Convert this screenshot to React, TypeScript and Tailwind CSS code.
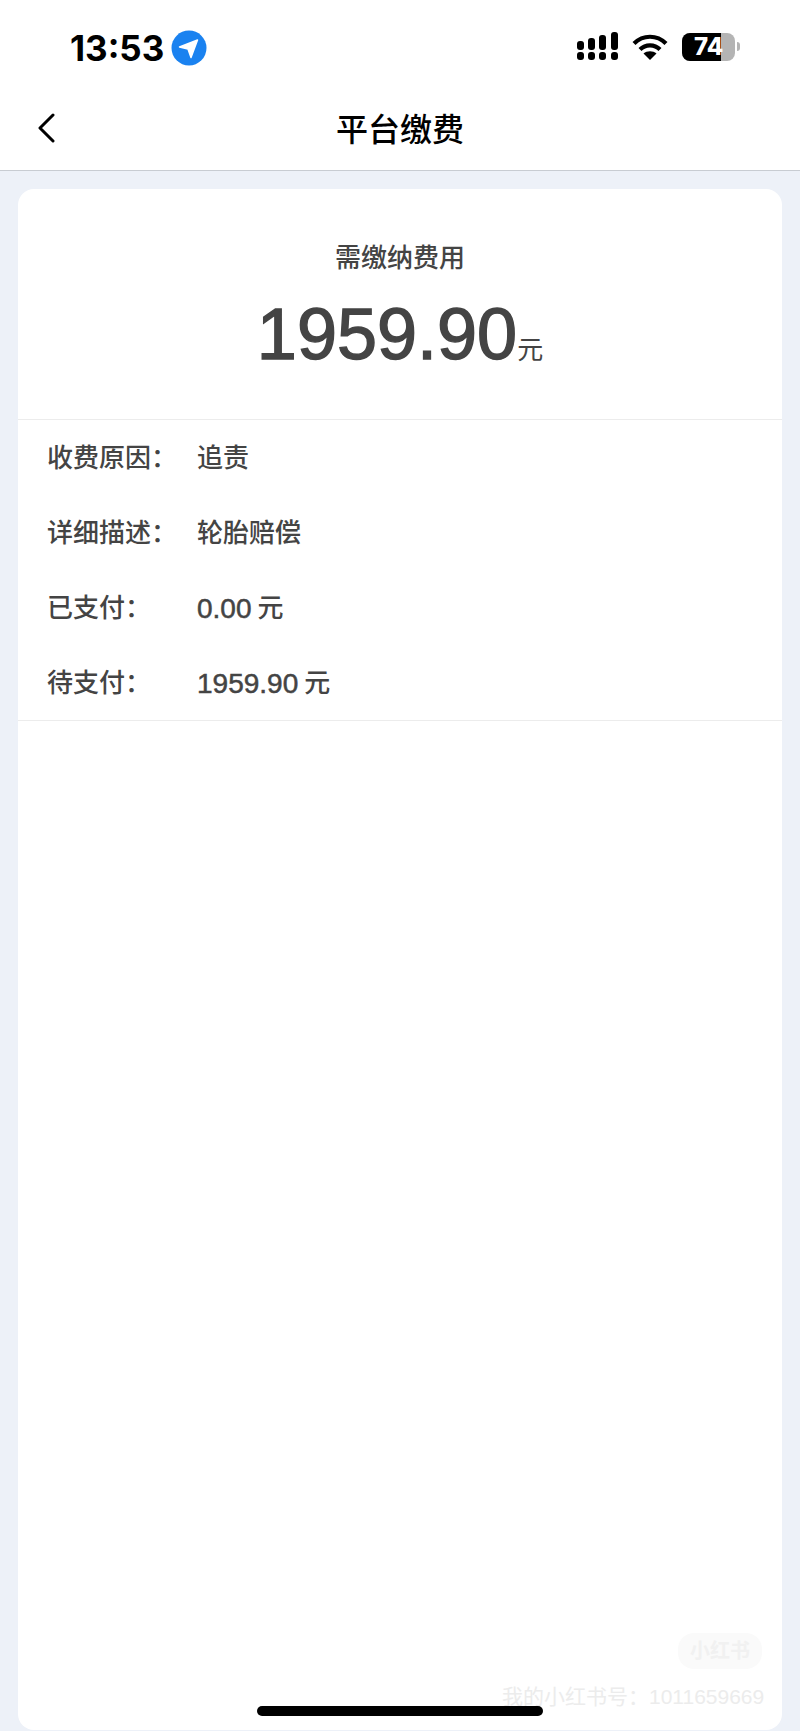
const cjk = 'font-["Liberation_Sans","Noto_Sans_CJK_SC",sans-serif]'

const ROWS = [
  { label: '收费原因：', value: '追责' },
  { label: '详细描述：', value: '轮胎赔偿' },
  { label: '已支付：', num: '0.00', value: '元' },
  { label: '待支付：', num: '1959.90', value: '元' },
]

function StatusBar() {
  return (
    <div className="h-[94px] flex items-start justify-between pl-[70px] pr-[60px] pt-[30px]">
      <div className="flex items-center gap-[6px]">
        <span className='text-[35px] leading-[36px] font-bold text-black font-["Inter",sans-serif]'>13:53</span>
        <svg width="36" height="36" viewBox="0 0 36 36" className="ml-[1px]">
          <circle cx="18" cy="18" r="17.5" fill="#1a82f0" />
          <path d="M8.5 17 L26.5 10 L20 27.5 L17 19 Z" fill="#fff" stroke="#fff" strokeWidth="1.5" strokeLinejoin="round" />
        </svg>
      </div>
      <div className="flex items-center gap-[14px] pt-[2px]">
        <svg width="41" height="29" viewBox="0 0 41 29" fill="#000">
          <rect x="0" y="9" width="7" height="9" rx="3" />
          <rect x="11" y="6" width="7" height="12" rx="3" />
          <rect x="22" y="3" width="7" height="15" rx="3" />
          <rect x="34" y="0" width="7" height="18" rx="3" />
          <rect x="0" y="20" width="7" height="8" rx="3" />
          <rect x="11" y="20" width="7" height="8" rx="3" />
          <rect x="22" y="20" width="7" height="8" rx="3" />
          <rect x="34" y="20" width="7" height="8" rx="3" />
        </svg>
        <svg width="36" height="28" viewBox="0 0 36 28" fill="none" stroke="#000" strokeWidth="4.2">
          <path d="M2 10.5 C11 1.5 25 1.5 34 10.5" />
          <path d="M8 16.5 C13.5 11 22.5 11 28 16.5" />
          <path d="M18 27 L11.5 20.5 C15 17.5 21 17.5 24.5 20.5 Z" fill="#000" stroke="none" />
        </svg>
        <div className="flex items-center gap-[2px]">
          <div className="relative w-[53px] h-[28px] rounded-[8px] bg-[#b4b4b4] overflow-hidden">
            <div className="w-[39px] h-full bg-black" />
            <span className='absolute left-[12px] top-0 text-[24px] leading-[28px] font-extrabold text-white font-["Inter",sans-serif]'>74</span>
          </div>
          <div className="w-[3px] h-[9px] rounded-r-full bg-[#b4b4b4]" />
        </div>
      </div>
    </div>
  )
}

export default function App() {
  return (
    <div className={`relative w-[800px] h-[1731px] overflow-hidden bg-[#edf1f8] ${cjk}`}>
      <div className="bg-white border-b border-[#c8ccd2]">
        <StatusBar />
        <div className="relative h-[76px] flex items-center justify-center">
          <svg className="absolute left-[36px] top-[19px]" width="20" height="30" viewBox="0 0 20 30" fill="none" stroke="#000" strokeWidth="3" strokeLinecap="round" strokeLinejoin="round">
            <path d="M17 2 L4 15 L17 28" />
          </svg>
          <h1 className="text-[32px] leading-[40px] font-medium text-black pb-[5px]">平台缴费</h1>
        </div>
      </div>

      <div className="mx-[18px] mt-[18px] h-[1541px] rounded-[16px] bg-white">
        <div className="h-[231px] pt-[51px] border-b border-[#ececec] flex flex-col items-center">
          <div className="text-[26px] leading-[36px] font-medium text-[#444]">需缴纳费用</div>
          <div className="mt-[15px] flex items-baseline text-[#444]">
            <span className="text-[72px] leading-[86px] [-webkit-text-stroke:1.4px_#444]">1959.90</span>
            <span className="text-[26px] leading-[30px]">元</span>
          </div>
        </div>
        <div className="border-b border-[#ececec] h-[301px] pt-[1px]">
          {ROWS.map(r => (
            <div key={r.label} className="h-[75px] flex items-center pl-[29px] text-[26px] font-medium text-[#444]">
              <span className="w-[150px]">{r.label}</span>
              {r.num && <span className="text-[28px] mr-[6px] [-webkit-text-stroke:0.5px_#444]">{r.num}</span>}
              <span>{r.value}</span>
            </div>
          ))}
        </div>
      </div>

      {/* xhs watermark, sits over the card */}
      <div className="absolute left-[678px] top-[1633px] w-[84px] h-[36px] rounded-[16px] bg-[#fafafa] flex items-center justify-center text-[20px] font-bold text-[#f1f1f1]">小红书</div>
      <div className="absolute left-[502px] top-[1683px] text-[21px] leading-[28px] text-[#ececec]">我的小红书号：1011659669</div>
      <div className="absolute left-[257px] top-[1706px] w-[286px] h-[10px] rounded-full bg-black" />
    </div>
  )
}
